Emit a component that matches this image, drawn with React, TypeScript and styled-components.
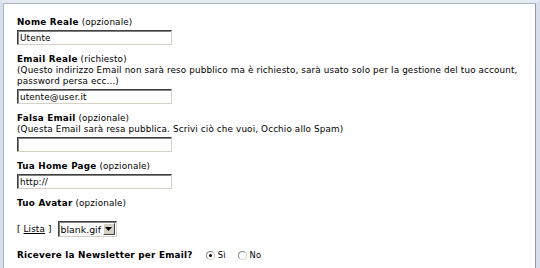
import { createGlobalStyle, styled } from "styled-components";

const GlobalStyle = createGlobalStyle`
  html, body {
    margin: 0;
    padding: 0;
    background: #ffffff;
  }
  body {
    font-family: "DejaVu Sans", Verdana, sans-serif;
    font-size: 8.8px;
    letter-spacing: 0.14px;
    color: #000;
  }
  b {
    font-weight: bold;
    letter-spacing: 0.25px;
  }
`;

const Field = ({
  label,
  note,
  hint,
  value,
}: {
  label: string;
  note: string;
  hint?: string[];
  value: string;
}) => (
  <FieldBlock>
    <Label>
      <b>{label}</b> ({note})
    </Label>
    {hint && hint.map((line) => <Label key={line}>{line}</Label>)}
    <TextInput defaultValue={value} />
  </FieldBlock>
);

const App = () => {
  return (
    <>
      <GlobalStyle />
      <Frame>
        <Form>
          <Field label="Nome Reale" note="opzionale" value="Utente" />
          <Field
            label="Email Reale"
            note="richiesto"
            hint={[
              "(Questo indirizzo Email non sarà reso pubblico ma è richiesto, sarà usato solo per la gestione del tuo account,",
              "password persa ecc...)",
            ]}
            value="utente@user.it"
          />
          <Field
            label="Falsa Email"
            note="opzionale"
            hint={["(Questa Email sarà resa pubblica. Scrivi ciò che vuoi, Occhio allo Spam)"]}
            value=""
          />
          <Field label="Tua Home Page" note="opzionale" value="http://" />

          <Label>
            <b>Tuo Avatar</b> (opzionale)
          </Label>

          <AvatarRow>
            <span>
              [ <ListLink href="#">Lista</ListLink> ]
            </span>
            <SelectBox>
              <SelectValue>blank.gif</SelectValue>
              <ArrowButton>
                <svg width="7" height="4" viewBox="0 0 7 4">
                  <path d="M0 0h7L3.5 4z" fill="#000" />
                </svg>
              </ArrowButton>
            </SelectBox>
          </AvatarRow>

          <NewsRow>
            <b>Ricevere la Newsletter per Email?</b>
            <RadioGroup>
              <RadioOption>
                <Radio $checked />
                Sì
              </RadioOption>
              <RadioOption>
                <Radio />
                No
              </RadioOption>
            </RadioGroup>
          </NewsRow>
        </Form>
      </Frame>
    </>
  );
};

export default App;

const Frame = styled.div`
  box-sizing: border-box;
  width: 540px;
  height: 268px;
  overflow: hidden;
  background: #ffffff;
  border-top: 3px solid #e3eaf2;
  border-left: 3px solid #d6e0ec;
  border-right: 4px solid #d6e0ec;
  box-shadow: inset 1px 1px 0 #a8b6c6, inset -1px 0 0 #8e9aa8;
`;

const Form = styled.div`
  display: flex;
  flex-direction: column;
  padding: 14px 0 0 14px;
`;

const FieldBlock = styled.div`
  display: flex;
  flex-direction: column;
  margin-bottom: 9px;
`;

const Label = styled.div`
  line-height: 11px;
  white-space: nowrap;
`;

const TextInput = styled.input`
  box-sizing: border-box;
  width: 155px;
  height: 15px;
  margin: 2px 0 0;
  padding: 0 2px;
  font-family: "DejaVu Sans", Verdana, sans-serif;
  font-size: 8.8px;
  letter-spacing: 0.14px;
  color: #000;
  background: #fff;
  border: 1px solid;
  border-color: #404040 #d4d0c8 #d4d0c8 #404040;
  box-shadow: inset 1px 1px 0 #808080;
  outline: none;
`;

const AvatarRow = styled.div`
  display: flex;
  align-items: center;
  gap: 6px;
  margin-top: 12px;
  line-height: 11px;
`;

const ListLink = styled.a`
  color: #000;
  text-decoration: underline;
`;

const SelectBox = styled.div`
  display: flex;
  align-items: stretch;
  box-sizing: border-box;
  width: 59px;
  height: 16px;
  border: 1px solid;
  border-color: #404040 #d4d0c8 #d4d0c8 #404040;
  box-shadow: inset 1px 1px 0 #808080;
  background: #fff;
`;

const SelectValue = styled.span`
  flex: 1;
  padding: 1px 0 0 2px;
  font-size: 9.4px;
  letter-spacing: 0;
  line-height: 13px;
  overflow: hidden;
  white-space: nowrap;
`;

const ArrowButton = styled.span`
  display: flex;
  align-items: center;
  justify-content: center;
  width: 12px;
  margin: 1px 1px 1px 0;
  background: #d4d0c8;
  border: 1px solid;
  border-color: #fff #404040 #404040 #fff;
  box-sizing: border-box;
`;

const NewsRow = styled.div`
  display: flex;
  align-items: center;
  gap: 13px;
  margin-top: 13px;
  line-height: 11px;
`;

const RadioGroup = styled.div`
  display: flex;
  align-items: center;
  gap: 12px;
`;

const RadioOption = styled.label`
  display: flex;
  align-items: center;
  gap: 3px;
  font-size: 8.4px;
`;

const Radio = styled.span<{ $checked?: boolean }>`
  position: relative;
  box-sizing: border-box;
  width: 9px;
  height: 9px;
  border-radius: 50%;
  border: 1px solid #8a8a8a;
  border-right-color: #d4d0c8;
  border-bottom-color: #d4d0c8;
  background: #fff;

  &::after {
    content: "";
    display: ${({ $checked }) => ($checked ? "block" : "none")};
    position: absolute;
    left: 2px;
    top: 2px;
    width: 3px;
    height: 3px;
    border-radius: 50%;
    background: #000;
  }
`;
